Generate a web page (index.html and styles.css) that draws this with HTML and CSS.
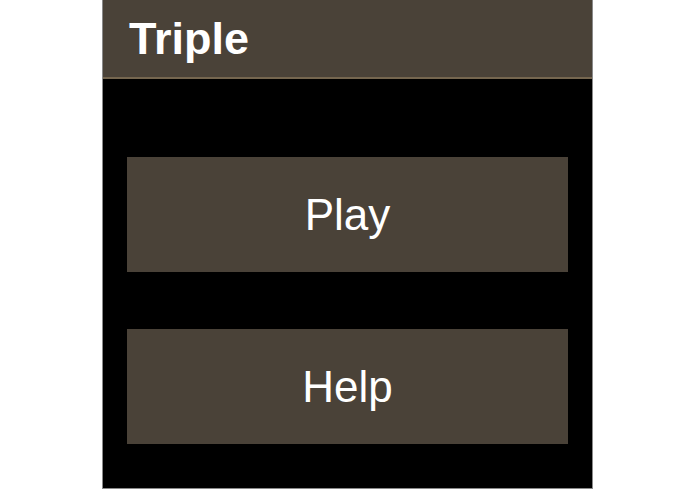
FILE: index.html
```html
<!DOCTYPE html>
<html lang="en">

<head>
    <meta charset="UTF-8">
    <meta name="viewport" content="width=device-width, initial-scale=1.0">
    <title>Triple</title>

    <link rel="stylesheet" href="styles.css">
</head>

<body>
    <!-- 主面板 -->
    <div class="panel">
        <div class="header">
            <h1 class="title">Triple</h1>
        </div>

        <div class="menu">
            <button class="menuBtn">Play</button>
            <button class="menuBtn">Help</button>
        </div>
    </div>
</body>

</html>
```

FILE: styles.css
```css
body {
    margin: 0;
    background-color: #fff;
    font-family: "Liberation Sans", Arial, sans-serif;
}

/* 面板 */
.panel {
    width: 489px;
    margin: 0 auto;
    background-color: #000;
    border: 1px solid #8a8a8a;
    border-top: none;
}

.header {
    height: 77px;
    background-color: #4a4238;
    border-bottom: 2px solid #75664f;
    display: flex;
    align-items: center;
    padding-left: 26px;
}

.title {
    margin: 0;
    color: #fff;
    font-size: 45px;
    font-weight: bold;
    line-height: 1;
}

/* 按鈕 */
.menu {
    display: flex;
    flex-direction: column;
    gap: 57px;
    padding: 78px 24px 44px 24px;
}

.menuBtn {
    height: 115px;
    border: none;
    background-color: #4a4238;
    color: #fff;
    font-family: "Liberation Sans", Arial, sans-serif;
    font-size: 44px;
    padding: 0;
}
```
